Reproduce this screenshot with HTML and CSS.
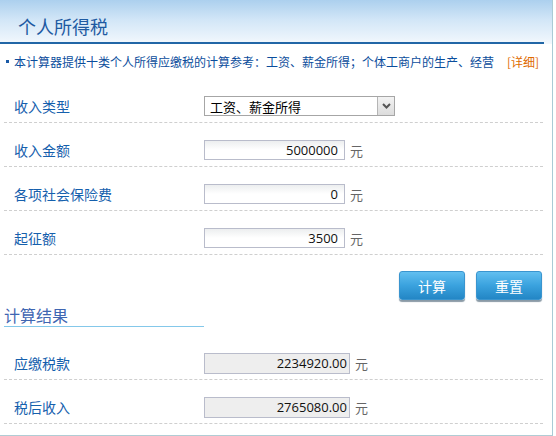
FILE: index.html
```html
<!DOCTYPE html>
<html lang="zh">
<head>
<meta charset="utf-8">
<title>个人所得税</title>
<link rel="stylesheet" href="styles.css">
</head>
<body>
<div class="page">
  <div class="header">
    <div class="header-inner"><h1 class="title">个人所得税</h1></div>
  </div>
  <div class="info">
    <span class="bullet"></span>
    <span class="info-text">本计算器提供十类个人所得应缴税的计算参考：工资、薪金所得；个体工商户的生产、经营</span>
    <a class="detail">[详细]</a>
  </div>
  <div class="row">
    <span class="label">收入类型</span>
    <div class="select">
      <span class="select-text">工资、薪金所得</span>
      <span class="select-btn"><svg width="9" height="6" viewBox="0 0 9 6"><path d="M1 1 L4.5 4.5 L8 1" fill="none" stroke="#555" stroke-width="2"/></svg></span>
    </div>
  </div>
  <div class="row">
    <span class="label">收入金额</span>
    <span class="input">5000000</span><span class="unit">元</span>
  </div>
  <div class="row">
    <span class="label">各项社会保险费</span>
    <span class="input">0</span><span class="unit">元</span>
  </div>
  <div class="row">
    <span class="label">起征额</span>
    <span class="input">3500</span><span class="unit">元</span>
  </div>
  <div class="buttons">
    <button class="btn">计算</button>
    <button class="btn">重置</button>
  </div>
  <div class="result-head">计算结果</div>
  <div class="row">
    <span class="label">应缴税款</span>
    <span class="input output">2234920.00</span><span class="unit">元</span>
  </div>
  <div class="row">
    <span class="label">税后收入</span>
    <span class="input output">2765080.00</span><span class="unit">元</span>
  </div>
</div>
</body>
</html>
```
FILE: styles.css
```css
* { box-sizing: border-box; }
html, body { margin: 0; padding: 0; background: #fff; }
body {
  font-family: "Noto Sans CJK SC", "Noto Sans", sans-serif;
  width: 556px;
  height: 436px;
  overflow: hidden;
}
.page {
  width: 553px;
  height: 436px;
  border-right: 1px solid #a9cbd6;
  border-bottom: 1px solid #b0ccd4;
  display: flex;
  flex-direction: column;
}
.header {
  height: 44px;
  background: linear-gradient(to bottom, #acd0ee 0%, #d2e6f7 45%, #f3f8fd 100%);
}
.header-inner {
  width: 544px;
  height: 44px;
  border-bottom: 2px solid #2166a6;
  padding-left: 18px;
  display: flex;
  align-items: flex-end;
}
.title {
  margin: 0;
  font-size: 18px;
  font-weight: normal;
  line-height: 24px;
  padding-bottom: 4px;
  color: #1d5aa2;
}
.info {
  height: 35px;
  display: flex;
  align-items: center;
  padding-left: 6px;
  font-size: 12px;
}
.bullet {
  width: 3px;
  height: 3px;
  background: #1a5aa6;
  margin-right: 5px;
}
.info-text { color: #0b4d9c; }
.detail { color: #e06a00; margin-left: 13px; }
.row {
  margin-left: 4px;
  width: 539px;
  height: 44px;
  padding-top: 11px;
  border-bottom: 1px dashed #cfcfcf;
  display: flex;
  align-items: center;
}
.label {
  width: 200px;
  padding-left: 10px;
  font-size: 14px;
  color: #1560ad;
}
.select {
  width: 191px;
  height: 20px;
  border: 1px solid #a6a6a6;
  display: flex;
  align-items: center;
  padding-left: 5px;
  font-size: 13px;
  color: #000;
}
.select-text { flex: 1; }
.select-btn {
  width: 17px;
  height: 18px;
  background: linear-gradient(#f3f3f3, #dcdcdc);
  border-left: 1px solid #b5b5b5;
  display: flex;
  align-items: center;
  justify-content: center;
}
.input {
  width: 141px;
  height: 20px;
  border: 1px solid #b9bccb;
  background: linear-gradient(#eceeef, #fff 50%);
  font-family: "Open Sans", "DejaVu Sans", sans-serif;
  font-size: 13px;
  line-height: 18px;
  text-align: right;
  padding-right: 6px;
  color: #111;
}
.output {
  width: 146px;
  height: 21px;
  background: #eeeeee;
  padding-right: 2px;
  line-height: 19px;
}
.unit {
  margin-left: 5px;
  font-size: 13px;
  color: #666;
}
.buttons {
  display: flex;
  justify-content: flex-end;
  gap: 11px;
  padding-top: 16px;
  padding-right: 10px;
}
.btn {
  width: 66px;
  height: 29px;
  border: 1px solid #3a95cf;
  border-radius: 3px;
  background: linear-gradient(#62bff0, #3aa2de 50%, #2386c5);
  box-shadow: 0 2px 1px #8a9aa6;
  color: #fff;
  font-family: "Noto Sans CJK SC", sans-serif;
  font-size: 14px;
  padding: 0;
}
.result-head {
  margin-left: 4px;
  width: 200px;
  padding-top: 4px;
  line-height: 22px;
  font-size: 16px;
  color: #3f66b2;
  border-bottom: 1px solid #84c8ea;
  margin-bottom: 9px;
}
```
